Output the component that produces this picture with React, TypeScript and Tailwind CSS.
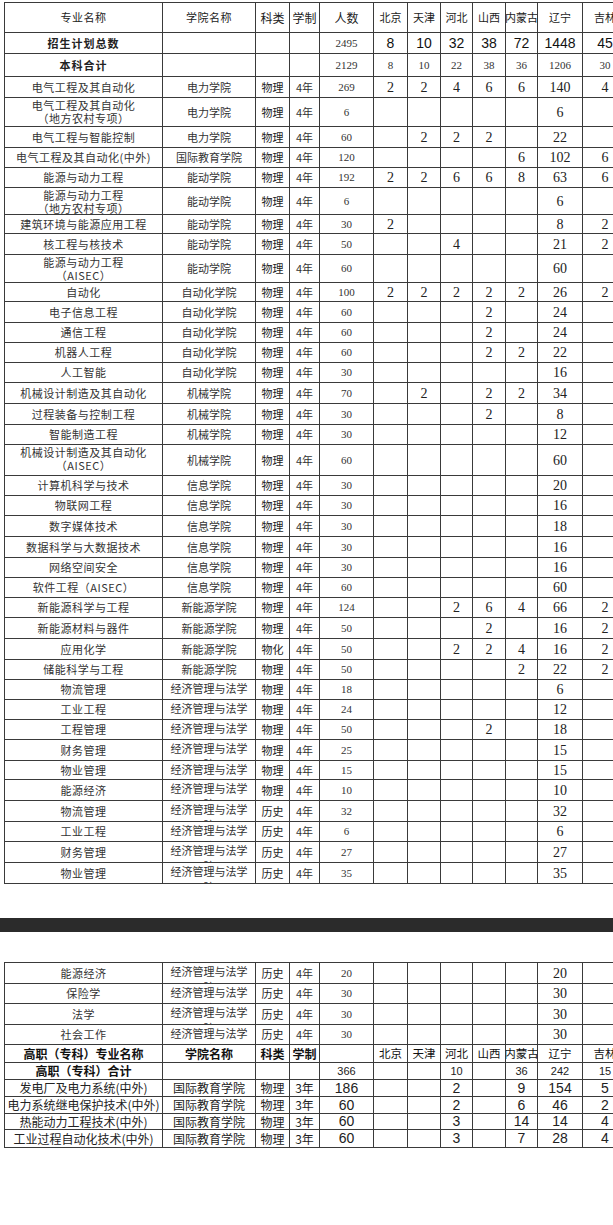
import type { ReactNode } from "react";
import clsx from "clsx";

// [row height, name, name line 2, college, 科类, 学制, 人数, provinces]
type Row = [string, string, string, string, string, string, string, string];

const W = [
  "w-[158px]",
  "w-[93px]",
  "w-[34px]",
  "w-[30px]",
  "w-[54px]",
  "w-[34px]",
  "w-[33px]",
  "w-[32px]",
  "w-[33px]",
  "w-[32px]",
  "w-[45px]",
  "w-[45px]",
];

const PROVINCES = ["北京", "天津", "河北", "山西", "内蒙古", "辽宁", "吉林"];

const serif = "font-['Liberation_Serif','Noto_Sans_CJK_SC',serif]";
const sans = "font-['Liberation_Sans','Noto_Sans_CJK_SC',sans-serif]";

const ECON = "经管";

const undergrad: Row[] = [
  ["h-[21px]", "电气工程及其自动化", "", "电力学院", "物理", "4年", "269", "2 2 4 6 6 140 4"],
  ["h-[29px]", "电气工程及其自动化", "（地方农村专项）", "电力学院", "物理", "4年", "6", "- - - - - 6 -"],
  ["h-[21px]", "电气工程与智能控制", "", "电力学院", "物理", "4年", "60", "- 2 2 2 - 22 -"],
  ["h-[20px]", "电气工程及其自动化(中外)", "", "国际教育学院", "物理", "4年", "120", "- - - - 6 102 6"],
  ["h-[20px]", "能源与动力工程", "", "能动学院", "物理", "4年", "192", "2 2 6 6 8 63 6"],
  ["h-[27px]", "能源与动力工程", "（地方农村专项）", "能动学院", "物理", "4年", "6", "- - - - - 6 -"],
  ["h-[19px]", "建筑环境与能源应用工程", "", "能动学院", "物理", "4年", "30", "2 - - - - 8 2"],
  ["h-[21px]", "核工程与核技术", "", "能动学院", "物理", "4年", "50", "- - 4 - - 21 2"],
  ["h-[28px]", "能源与动力工程", "（AISEC）", "能动学院", "物理", "4年", "60", "- - - - - 60 -"],
  ["h-[19px]", "自动化", "", "自动化学院", "物理", "4年", "100", "2 2 2 2 2 26 2"],
  ["h-[21px]", "电子信息工程", "", "自动化学院", "物理", "4年", "60", "- - - 2 - 24 -"],
  ["h-[20px]", "通信工程", "", "自动化学院", "物理", "4年", "60", "- - - 2 - 24 -"],
  ["h-[20px]", "机器人工程", "", "自动化学院", "物理", "4年", "60", "- - - 2 2 22 -"],
  ["h-[20px]", "人工智能", "", "自动化学院", "物理", "4年", "30", "- - - - - 16 -"],
  ["h-[21px]", "机械设计制造及其自动化", "", "机械学院", "物理", "4年", "70", "- 2 - 2 2 34 -"],
  ["h-[21px]", "过程装备与控制工程", "", "机械学院", "物理", "4年", "30", "- - - 2 - 8 -"],
  ["h-[20px]", "智能制造工程", "", "机械学院", "物理", "4年", "30", "- - - - - 12 -"],
  ["h-[31px]", "机械设计制造及其自动化", "（AISEC）", "机械学院", "物理", "4年", "60", "- - - - - 60 -"],
  ["h-[20px]", "计算机科学与技术", "", "信息学院", "物理", "4年", "30", "- - - - - 20 -"],
  ["h-[20px]", "物联网工程", "", "信息学院", "物理", "4年", "30", "- - - - - 16 -"],
  ["h-[21px]", "数字媒体技术", "", "信息学院", "物理", "4年", "30", "- - - - - 18 -"],
  ["h-[21px]", "数据科学与大数据技术", "", "信息学院", "物理", "4年", "30", "- - - - - 16 -"],
  ["h-[20px]", "网络空间安全", "", "信息学院", "物理", "4年", "30", "- - - - - 16 -"],
  ["h-[20px]", "软件工程（AISEC）", "", "信息学院", "物理", "4年", "60", "- - - - - 60 -"],
  ["h-[20px]", "新能源科学与工程", "", "新能源学院", "物理", "4年", "124", "- - 2 6 4 66 2"],
  ["h-[21px]", "新能源材料与器件", "", "新能源学院", "物理", "4年", "50", "- - - 2 - 16 2"],
  ["h-[21px]", "应用化学", "", "新能源学院", "物化", "4年", "50", "- - 2 2 4 16 2"],
  ["h-[20px]", "储能科学与工程", "", "新能源学院", "物理", "4年", "50", "- - - - 2 22 2"],
  ["h-[20px]", "物流管理", "", ECON, "物理", "4年", "18", "- - - - - 6 -"],
  ["h-[20px]", "工业工程", "", ECON, "物理", "4年", "24", "- - - - - 12 -"],
  ["h-[20px]", "工程管理", "", ECON, "物理", "4年", "50", "- - - 2 - 18 -"],
  ["h-[21px]", "财务管理", "", ECON, "物理", "4年", "25", "- - - - - 15 -"],
  ["h-[19px]", "物业管理", "", ECON, "物理", "4年", "15", "- - - - - 15 -"],
  ["h-[21px]", "能源经济", "", ECON, "物理", "4年", "10", "- - - - - 10 -"],
  ["h-[21px]", "物流管理", "", ECON, "历史", "4年", "32", "- - - - - 32 -"],
  ["h-[20px]", "工业工程", "", ECON, "历史", "4年", "6", "- - - - - 6 -"],
  ["h-[21px]", "财务管理", "", ECON, "历史", "4年", "27", "- - - - - 27 -"],
  ["h-[21px]", "物业管理", "", ECON, "历史", "4年", "35", "- - - - - 35 -"],
];

const undergradMore: Row[] = [
  ["h-[21px]", "能源经济", "", ECON, "历史", "4年", "20", "- - - - - 20 -"],
  ["h-[20px]", "保险学", "", ECON, "历史", "4年", "30", "- - - - - 30 -"],
  ["h-[21px]", "法学", "", ECON, "历史", "4年", "30", "- - - - - 30 -"],
  ["h-[20px]", "社会工作", "", ECON, "历史", "4年", "30", "- - - - - 30 -"],
];

const vocational: Row[] = [
  ["h-[17px]", "发电厂及电力系统(中外)", "", "国际教育学院", "物理", "3年", "186", "- - 2 - 9 154 5"],
  ["h-[17px]", "电力系统继电保护技术(中外)", "", "国际教育学院", "物理", "3年", "60", "- - 2 - 6 46 2"],
  ["h-[16px]", "热能动力工程技术(中外)", "", "国际教育学院", "物理", "3年", "60", "- - 3 - 14 14 4"],
  ["h-[18px]", "工业过程自动化技术(中外)", "", "国际教育学院", "物理", "3年", "60", "- - 3 - 7 28 4"],
];

const split = (p: string) => p.split(" ").map((v) => (v === "-" ? "" : v));

function Cell({ i, className, children }: { i: number; className?: string; children?: ReactNode }) {
  return (
    <div
      className={clsx(
        "flex shrink-0 items-center justify-center overflow-hidden whitespace-nowrap border-r border-[#3a3a3a]",
        W[i],
        className
      )}
    >
      {children}
    </div>
  );
}

function Line({ h, children }: { h: string; children: ReactNode }) {
  return <div className={clsx("flex w-max border-b border-[#3a3a3a]", h)}>{children}</div>;
}

function MajorRow({ r }: { r: Row }) {
  const [h, name, name2, college, kind, years, total, p] = r;
  const econ = college === ECON;
  return (
    <Line h={h}>
      <Cell
        i={0}
        className={clsx("tracking-[0.5px]", name2 && "flex-col justify-start pt-[1px] leading-[13px]")}
      >
        <span>{name}</span>
        {name2 && <span>{name2}</span>}
      </Cell>
      <Cell i={1} className={clsx(econ && "flex-col justify-start leading-[16px]")}>
        {econ ? (
          <>
            <span>经济管理与法学</span>
            <span>院</span>
          </>
        ) : (
          college
        )}
      </Cell>
      <Cell i={2} className="text-[#222]">
        {kind}
      </Cell>
      <Cell i={3}>{years}</Cell>
      <Cell i={4} className={clsx(serif, "text-[11px]")}>
        {total}
      </Cell>
      {split(p).map((v, k) => (
        <Cell key={k} i={5 + k} className={clsx(serif, "text-[14px] text-[#222]")}>
          {v}
        </Cell>
      ))}
    </Line>
  );
}

function VocationalRow({ r }: { r: Row }) {
  const [h, name, , college, kind, years, total, p] = r;
  return (
    <Line h={h}>
      <Cell i={0} className="text-[12px] text-[#222]">
        {name}
      </Cell>
      <Cell i={1} className="text-[12px] text-[#222]">
        {college}
      </Cell>
      <Cell i={2} className="text-[12px] text-[#222]">
        {kind}
      </Cell>
      <Cell i={3} className="text-[12px] text-[#222]">
        {years}
      </Cell>
      <Cell i={4} className={clsx(sans, "text-[14px] text-[#222]")}>
        {total}
      </Cell>
      {split(p).map((v, k) => (
        <Cell key={k} i={5 + k} className={clsx(sans, "text-[14px] text-[#222]")}>
          {v}
        </Cell>
      ))}
    </Line>
  );
}

export default function App() {
  return (
    <div className="min-h-[1225px] w-full overflow-hidden bg-white pt-[2px] font-['Noto_Sans_CJK_SC',sans-serif] text-[11px] text-[#333]">
      {/* 本科招生计划 */}
      <div className="ml-[4px] w-max border-l border-t border-[#3a3a3a]">
        <Line h="h-[30px]">
          {["专业名称", "学院名称", "科类", "学制", "人数", ...PROVINCES].map((t, i) => (
            <Cell
              key={t}
              i={i}
              className={clsx("text-[#222]", i < 2 ? "tracking-[0.5px]" : i < 5 ? "text-[12px]" : "text-[11px]")}
            >
              {t}
            </Cell>
          ))}
        </Line>
        <Line h="h-[21px]">
          <Cell i={0} className="font-bold tracking-[1px] text-[#222]">
            招生计划总数
          </Cell>
          <Cell i={1} />
          <Cell i={2} />
          <Cell i={3} />
          <Cell i={4} className={clsx(serif, "text-[11px]")}>
            2495
          </Cell>
          {split("8 10 32 38 72 1448 45").map((v, k) => (
            <Cell key={k} i={5 + k} className={clsx(sans, "text-[14px] text-[#111]")}>
              {v}
            </Cell>
          ))}
        </Line>
        <Line h="h-[23px]">
          <Cell i={0} className="font-bold tracking-[1px] text-[#222]">
            本科合计
          </Cell>
          <Cell i={1} />
          <Cell i={2} />
          <Cell i={3} />
          <Cell i={4} className={clsx(serif, "text-[11px]")}>
            2129
          </Cell>
          {split("8 10 22 38 36 1206 30").map((v, k) => (
            <Cell key={k} i={5 + k} className={clsx(serif, "text-[11px]")}>
              {v}
            </Cell>
          ))}
        </Line>
        {undergrad.map((r, k) => (
          <MajorRow key={k} r={r} />
        ))}
      </div>

      <div className="mt-[34px] h-[14px] w-full bg-[#2b2b2b]" />

      {/* 续表 + 高职（专科） */}
      <div className="ml-[4px] mt-[30px] w-max border-l border-t border-[#3a3a3a]">
        {undergradMore.map((r, k) => (
          <MajorRow key={k} r={r} />
        ))}
        <Line h="h-[18px]">
          {["高职（专科）专业名称", "学院名称", "科类", "学制", "", ...PROVINCES].map((t, i) => (
            <Cell
              key={i}
              i={i}
              className={clsx("text-[#111]", i < 4 ? "text-[12px] font-bold" : "text-[11.5px]")}
            >
              {t}
            </Cell>
          ))}
        </Line>
        <Line h="h-[17px]">
          <Cell i={0} className="text-[12px] font-bold text-[#111]">
            高职（专科）合计
          </Cell>
          <Cell i={1} />
          <Cell i={2} />
          <Cell i={3} />
          <Cell i={4} className={clsx(sans, "text-[11px] text-[#222]")}>
            366
          </Cell>
          {split("- - 10 - 36 242 15").map((v, k) => (
            <Cell key={k} i={5 + k} className={clsx(sans, "text-[11px] text-[#222]")}>
              {v}
            </Cell>
          ))}
        </Line>
        {vocational.map((r, k) => (
          <VocationalRow key={k} r={r} />
        ))}
      </div>
    </div>
  );
}
